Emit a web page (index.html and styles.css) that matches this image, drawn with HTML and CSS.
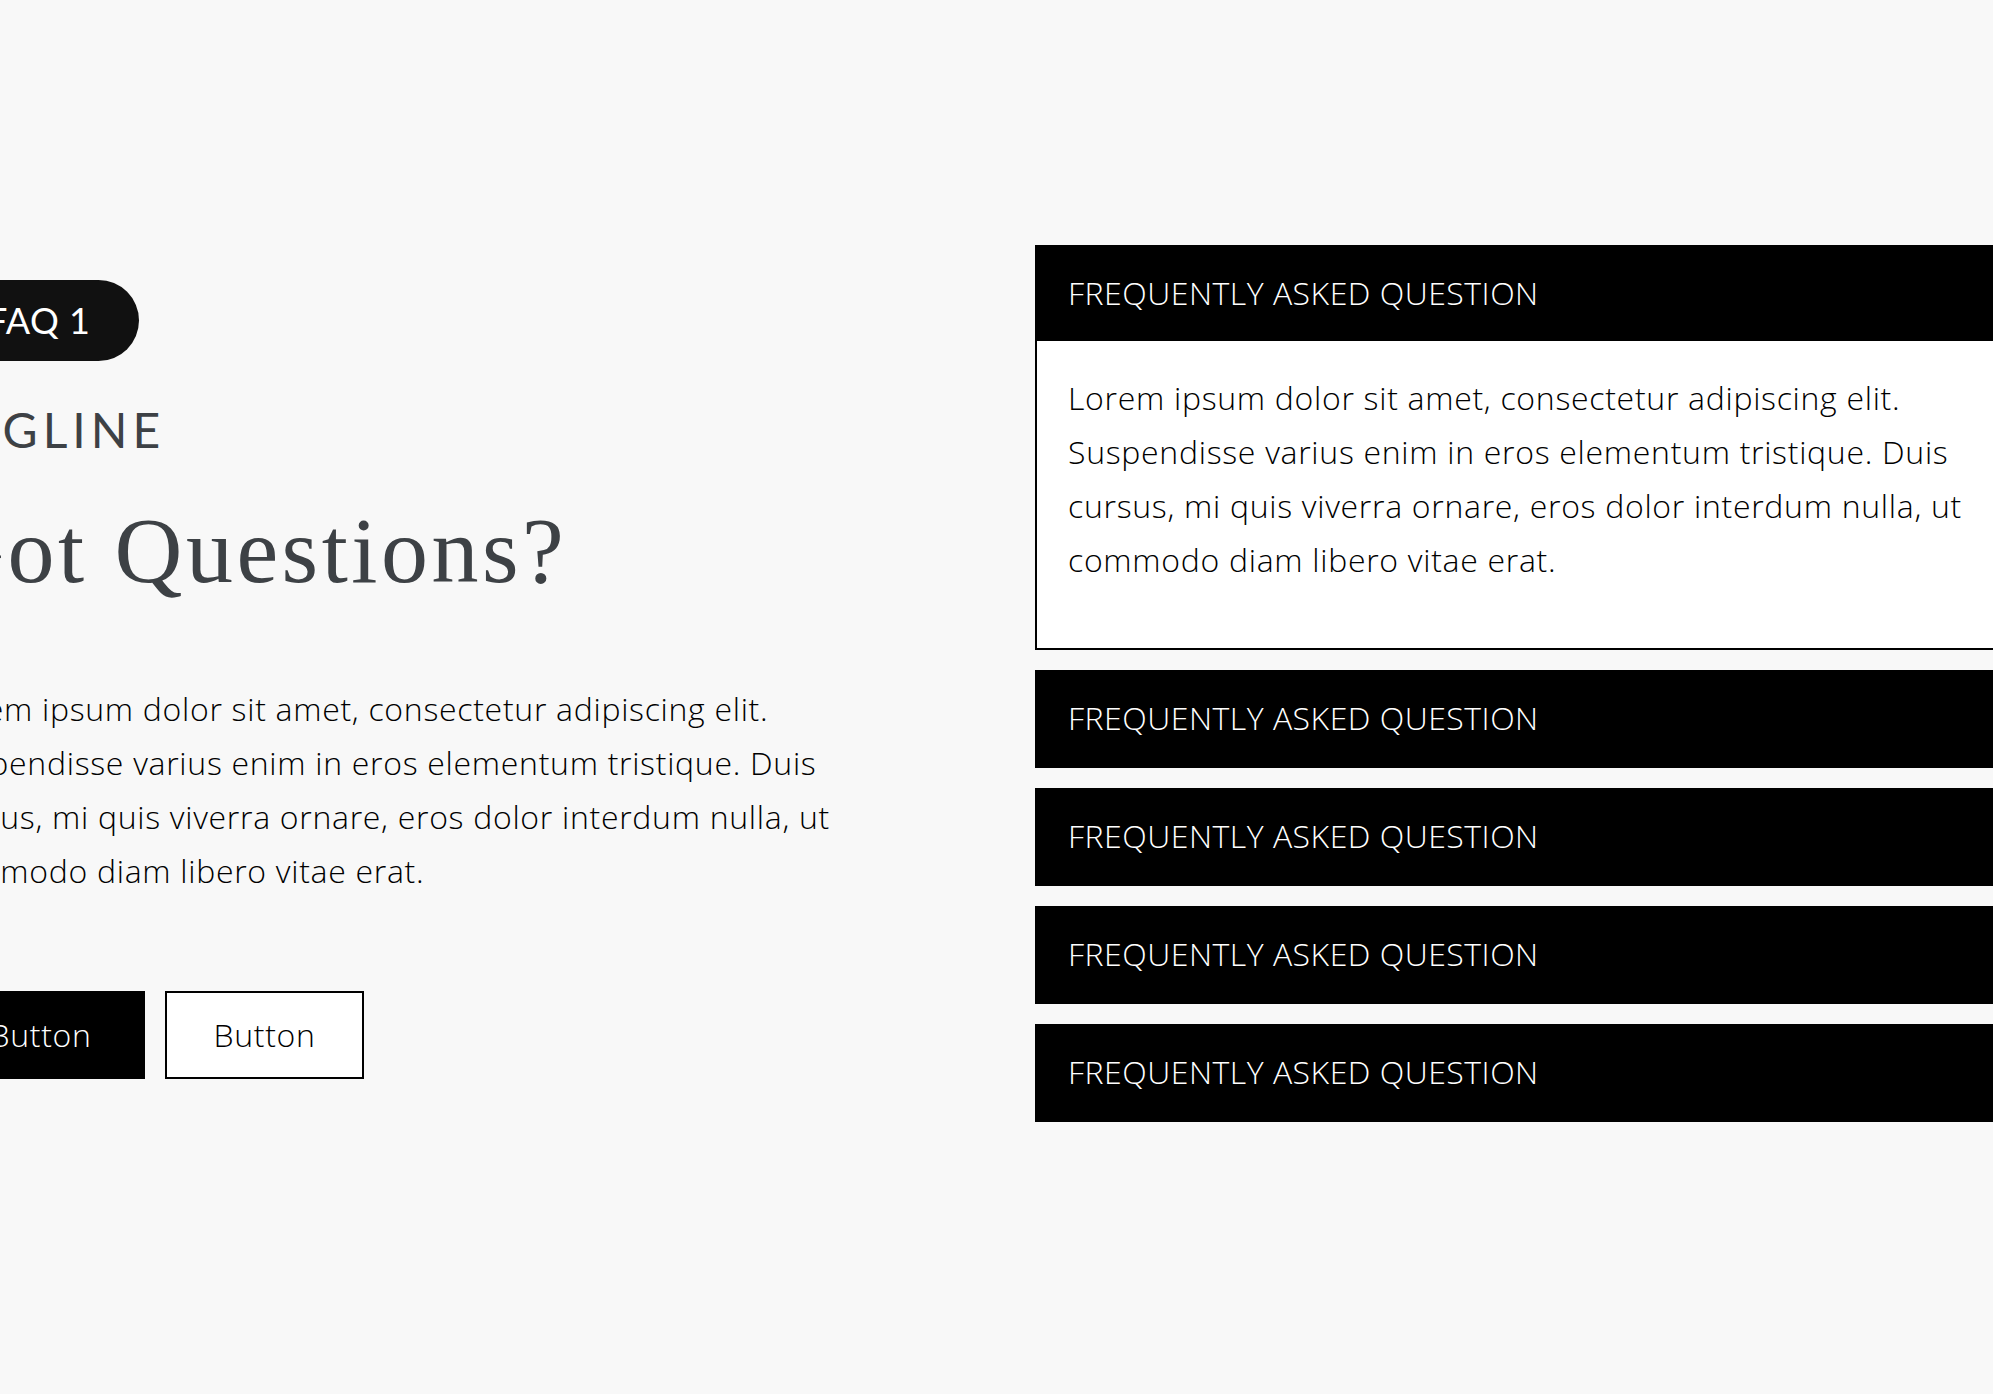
FILE: index.html
```html
<!DOCTYPE html>
<html lang="en">
<head>
  <meta charset="UTF-8">
  <title>FAQ 1</title>
  <link rel="stylesheet" href="styles.css">
</head>
<body>
  <section class="faq">
    <!-- Left: intro copy + actions -->
    <div class="faq-intro">
      <span class="badge">FAQ 1</span>
      <p class="tagline">TAGLINE</p>
      <h1>Got Questions?</h1>
      <p class="lead">
        Lorem ipsum dolor sit amet, consectetur adipiscing elit. Suspendisse varius enim in eros elementum tristique. Duis cursus, mi quis viverra ornare, eros dolor interdum nulla, ut commodo diam libero vitae erat.
      </p>
      <div class="actions">
        <button class="btn btn-primary">Button</button>
        <button class="btn btn-secondary">Button</button>
      </div>
    </div>

    <!-- Right: accordion -->
    <div class="faq-list">
      <div class="faq-item open">
        <div class="faq-question">FREQUENTLY ASKED QUESTION</div>
        <div class="faq-answer">
          Lorem ipsum dolor sit amet, consectetur adipiscing elit. Suspendisse varius enim in eros elementum tristique. Duis cursus, mi quis viverra ornare, eros dolor interdum nulla, ut commodo diam libero vitae erat.
        </div>
      </div>
      <div class="faq-item">
        <div class="faq-question">FREQUENTLY ASKED QUESTION</div>
      </div>
      <div class="faq-item">
        <div class="faq-question">FREQUENTLY ASKED QUESTION</div>
      </div>
      <div class="faq-item">
        <div class="faq-question">FREQUENTLY ASKED QUESTION</div>
      </div>
      <div class="faq-item">
        <div class="faq-question">FREQUENTLY ASKED QUESTION</div>
      </div>
    </div>
  </section>
</body>
</html>
```

FILE: styles.css
```css
/* Base */
body {
  margin: 0;
  background: #f8f8f8;
  overflow: hidden;
  font-family: "Open Sans", sans-serif;
  font-weight: 300;
  letter-spacing: 0.7px;
  color: #000;
}

/* Two column section, wider than the viewport */
.faq {
  display: grid;
  grid-template-columns: 1019px 1019px;
  column-gap: 80px;
  align-items: start;
  margin-left: -64px;
  padding-top: 245px;
  width: 2118px;
}

/* Intro column */
.faq-intro {
  margin-top: 35px;
}
.badge {
  display: inline-block;
  height: 81px;
  line-height: 81px;
  padding: 0 49px 0 51px;
  border-radius: 41px;
  background: #111;
  color: #fff;
  font-family: Lato, sans-serif;
  font-weight: 400;
  font-size: 36px;
  letter-spacing: 0.5px;
}
.tagline {
  margin: 40px 0 0;
  font-family: Lato, sans-serif;
  font-weight: 400;
  font-size: 48px;
  line-height: 1.2;
  letter-spacing: 5px;
  color: #3d4145;
}
h1 {
  margin: 35px 0 0;
  font-family: "Liberation Serif", serif;
  font-weight: 400;
  font-size: 94px;
  line-height: 1.2;
  letter-spacing: 3.5px;
  color: #3d4145;
}
.lead {
  margin: 76px 0 0;
  max-width: 955px;
  font-size: 32px;
  line-height: 54px;
}
.actions {
  display: flex;
  gap: 20px;
  margin-top: 93px;
}
.btn {
  height: 88px;
  padding: 0 0 2px;
  border: 2px solid #000;
  font-family: "Open Sans", sans-serif;
  font-weight: 300;
  font-size: 32px;
  letter-spacing: 0.7px;
  cursor: pointer;
}
.btn-primary {
  width: 209px;
  background: #000;
  color: #fff;
}
.btn-secondary {
  width: 199px;
  background: #fff;
  color: #000;
}

/* Accordion */
.faq-list {
  display: flex;
  flex-direction: column;
  gap: 20px;
}
.faq-item {
  border: 2px solid #000;
  background: #000;
}
.faq-item.open {
  background: #fff;
}
.faq-question {
  box-sizing: border-box;
  display: flex;
  align-items: center;
  height: 94px;
  padding: 0 31px 4px;
  background: #000;
  color: #fff;
  font-size: 32px;
  letter-spacing: 0.5px;
}
.faq-answer {
  padding: 30px 31px 61px;
  font-size: 32px;
  line-height: 54px;
}
```
